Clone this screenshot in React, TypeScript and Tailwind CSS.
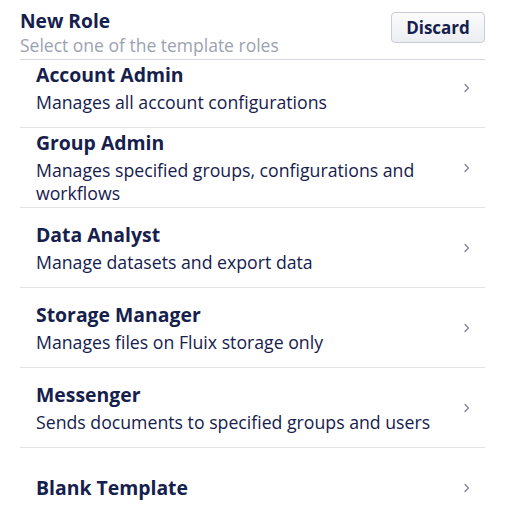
import React from 'react';

const roles = [
  { title: 'Account Admin', desc: 'Manages all account configurations' },
  { title: 'Group Admin', desc: 'Manages specified groups, configurations and workflows' },
  { title: 'Data Analyst', desc: 'Manage datasets and export data' },
  { title: 'Storage Manager', desc: 'Manages files on Fluix storage only' },
  { title: 'Messenger', desc: 'Sends documents to specified groups and users' },
  { title: 'Blank Template', desc: '' },
];

const Chevron = () => (
  <svg width="8" height="10" viewBox="0 0 8 10" fill="none" className="shrink-0">
    <path d="M2 1.5L5.5 5L2 8.5" stroke="#7c8294" strokeWidth="1.3" strokeLinecap="round" strokeLinejoin="round" />
  </svg>
);

export default function App() {
  return (
    <div
      className="w-[505px] h-[514px] overflow-hidden bg-white text-[#16204d]"
      style={{ fontFamily: '"Open Sans", sans-serif' }}
    >
      <div className="relative z-10 bg-white mx-5 flex justify-between border-b border-[#d3d7dd] pt-[8px] pb-[3px]">
        <div className="flex flex-col">
          <span className="text-[19.2px] font-bold leading-[26px]">New Role</span>
          <span className="text-[17.5px] leading-[22px] text-[#9ba2b0]">Select one of the template roles</span>
        </div>
        <button className="mt-[4px] h-[31px] w-[94px] rounded-[4px] border border-[#c9ccd2] bg-gradient-to-b from-[#fbfbfc] to-[#eceef1] text-[17px] font-bold text-[#16204d]">
          Discard
        </button>
      </div>
      <ul className="-mt-3 mx-5">
        {roles.map((r) => (
          <li
            key={r.title}
            className="min-h-[80px] flex items-center justify-between gap-4 border-b border-[#e2e3e6] pl-4 pr-[14px]"
          >
            <div className="flex flex-col">
              <span className="text-[19.4px] font-bold leading-[26px]">{r.title}</span>
              {r.desc && <span className="mt-[3px] text-[17.7px] leading-[23px]">{r.desc}</span>}
            </div>
            <Chevron />
          </li>
        ))}
      </ul>
    </div>
  );
}
